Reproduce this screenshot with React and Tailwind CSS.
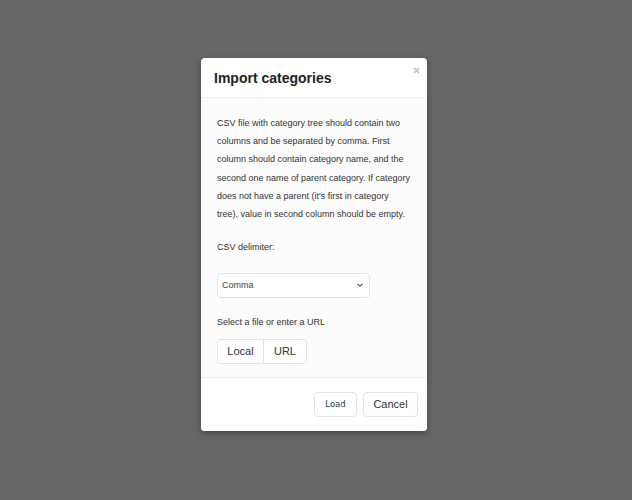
export default function App() {
  return (
    <div className="w-[632px] h-[500px] bg-[#666666] flex pl-[201px] pt-[58px]" style={{ fontFamily: '"Liberation Sans", Arial, sans-serif' }}>
      <div className="w-[226px] h-[373px] bg-white rounded-[4px] shadow-[0_2px_6px_rgba(0,0,0,0.35)] flex flex-col relative">
        <svg width="7" height="7" viewBox="0 0 7 7" className="absolute right-[7px] top-[9px]">
          <path d="M1 1 L6 6 M6 1 L1 6" stroke="#c2c2c2" strokeWidth="1.6" />
        </svg>
        <div className="h-[40px] border-b border-[#eeeeee] px-[13px] flex items-center">
          <h1 className="text-[14px] font-bold text-[#222] pt-[1px]">Import categories</h1>
        </div>
        <div className="flex-1 bg-[#fcfcfc] px-[16px] pt-[16px]">
          <p className="text-[9px] leading-[18.2px] text-[#333]">
            CSV file with category tree should contain two columns and be separated by comma. First column should contain category name, and the second one name of parent category. If category does not have a parent (it's first in category tree), value in second column should be empty.
          </p>
          <p className="text-[9px] text-[#333] mt-[18px]">CSV delimiter:</p>
          <div className="mt-[18px] w-[153px] h-[25px] border border-[#dfe3e8] rounded-[4px] bg-white flex items-center justify-between px-[4px]">
            <span className="text-[9px] text-[#444] pt-[1px]">Comma</span>
            <svg width="8" height="8" viewBox="0 0 8 8" className="mr-[1px]"><path d="M1.5 2.8 L4 5.3 L6.5 2.8" fill="none" stroke="#444" strokeWidth="1.1" /></svg>
          </div>
          <p className="text-[9px] text-[#333] mt-[18px]">Select a file or enter a URL</p>
          <div className="mt-[10px] flex h-[25px] w-[90px] border border-[#dfe3e8] rounded-[4px] bg-white text-[11px] text-[#333]">
            <div className="w-[46px] flex items-center justify-center border-r border-[#dfe3e8]">Local</div>
            <div className="flex-1 flex items-center justify-center">URL</div>
          </div>
        </div>
        <div className="h-[54px] border-t border-[#eeeeee] flex items-start justify-end gap-[6px] pt-[14px] pr-[9px] bg-white rounded-b-[4px]">
          <button className="h-[25px] w-[43px] border border-[#dfe3e8] rounded-[4px] text-[8.5px] text-[#123f5e] bg-white" style={{ fontFamily: '"DejaVu Sans", sans-serif' }}>Load</button>
          <button className="h-[25px] w-[55px] border border-[#dfe3e8] rounded-[4px] text-[11px] text-[#333] bg-white">Cancel</button>
        </div>
      </div>
    </div>
  );
}
